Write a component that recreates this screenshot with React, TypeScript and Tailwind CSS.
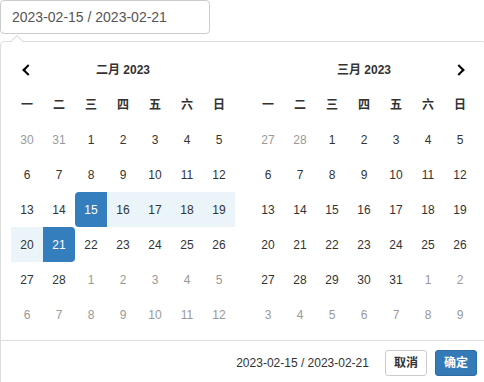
import React from "react";

type Cell = { d: number; off?: boolean; start?: boolean; end?: boolean; inRange?: boolean };

const feb: Cell[][] = [
  [{ d: 30, off: true }, { d: 31, off: true }, { d: 1 }, { d: 2 }, { d: 3 }, { d: 4 }, { d: 5 }],
  [{ d: 6 }, { d: 7 }, { d: 8 }, { d: 9 }, { d: 10 }, { d: 11 }, { d: 12 }],
  [{ d: 13 }, { d: 14 }, { d: 15, start: true }, { d: 16, inRange: true }, { d: 17, inRange: true }, { d: 18, inRange: true }, { d: 19, inRange: true }],
  [{ d: 20, inRange: true }, { d: 21, end: true }, { d: 22 }, { d: 23 }, { d: 24 }, { d: 25 }, { d: 26 }],
  [{ d: 27 }, { d: 28 }, { d: 1, off: true }, { d: 2, off: true }, { d: 3, off: true }, { d: 4, off: true }, { d: 5, off: true }],
  [6, 7, 8, 9, 10, 11, 12].map((d) => ({ d, off: true })),
];

const mar: Cell[][] = [
  [{ d: 27, off: true }, { d: 28, off: true }, { d: 1 }, { d: 2 }, { d: 3 }, { d: 4 }, { d: 5 }],
  [6, 7, 8, 9, 10, 11, 12].map((d) => ({ d })),
  [13, 14, 15, 16, 17, 18, 19].map((d) => ({ d })),
  [20, 21, 22, 23, 24, 25, 26].map((d) => ({ d })),
  [{ d: 27 }, { d: 28 }, { d: 29 }, { d: 30 }, { d: 31 }, { d: 1, off: true }, { d: 2, off: true }],
  [3, 4, 5, 6, 7, 8, 9].map((d) => ({ d, off: true })),
];

const weekdays = ["一", "二", "三", "四", "五", "六", "日"];

function DayCell({ c }: { c: Cell }) {
  let cls = "w-[32px] h-[35px] flex items-center justify-center text-[12px] ";
  if (c.start) cls += "bg-[#357ebd] text-white rounded-l-[4px]";
  else if (c.end) cls += "bg-[#357ebd] text-white rounded-r-[4px]";
  else if (c.inRange) cls += "bg-[#ebf4f8] text-[#333]";
  else if (c.off) cls += "text-[#999]";
  else cls += "text-[#333]";
  return <div className={cls}>{c.d}</div>;
}

function Calendar({ title, rows, prev, next }: { title: string; rows: Cell[][]; prev?: boolean; next?: boolean }) {
  return (
    <div className="w-[224px] flex flex-col">
      <div className="flex h-[35px] items-center">
        <div className="w-[32px] h-[35px] flex items-center justify-center">
          {prev && <span className="inline-block border-solid border-black border-r-2 border-b-2 p-[3px] rotate-135 ml-[2px]" />}
        </div>
        <div className="w-[160px] text-center text-[12px] font-bold text-[#333]">{title}</div>
        <div className="w-[32px] h-[35px] flex items-center justify-center">
          {next && <span className="inline-block border-solid border-black border-r-2 border-b-2 p-[3px] -rotate-45 mr-[2px]" />}
        </div>
      </div>
      <div className="flex h-[35px] items-center">
        {weekdays.map((w) => (
          <div key={w} className="w-[32px] text-center text-[12px] font-bold text-[#333]">
            {w}
          </div>
        ))}
      </div>
      {rows.map((r, i) => (
        <div key={i} className="flex">
          {r.map((c, j) => (
            <DayCell key={j} c={c} />
          ))}
        </div>
      ))}
    </div>
  );
}

export default function App() {
  return (
    <div className="w-[484px] h-[382px] overflow-hidden bg-white font-['Liberation_Sans','Noto_Sans_CJK_SC',sans-serif]">
      <div className="w-[210px] h-[34px] border border-[#ccc] rounded-[4px] flex items-center pl-[11px] text-[14px] text-[#555]">
        2023-02-15 / 2023-02-21
      </div>
      <div className="relative mt-[7px] w-[486px] border border-[#ddd] rounded-[4px] bg-white">
        <div className="absolute top-[-7px] left-[9px] w-0 h-0 border-l-[7px] border-r-[7px] border-b-[7px] border-l-transparent border-r-transparent border-b-[#ccc]" />
        <div className="absolute top-[-6px] left-[10px] w-0 h-0 border-l-[6px] border-r-[6px] border-b-[6px] border-l-transparent border-r-transparent border-b-white" />
        <div className="flex pt-[10px] pb-[8px] pl-[10px]">
          <Calendar title="二月 2023" rows={feb} prev />
          <div className="ml-[17px]">
            <Calendar title="三月 2023" rows={mar} next />
          </div>
        </div>
        <div className="border-t border-[#ddd] flex items-center justify-end pt-[9px] pb-[8px] pr-[8px]">
          <span className="text-[12px] text-[#333] mr-[8px]">2023-02-15 / 2023-02-21</span>
          <button className="ml-[8px] h-[26px] px-[8px] border border-[#ccc] rounded-[3px] bg-white text-[12px] font-bold text-[#333]">
            取消
          </button>
          <button className="ml-[8px] h-[26px] px-[8px] border border-[#2e6da4] rounded-[3px] bg-[#337ab7] text-[12px] font-bold text-white">
            确定
          </button>
        </div>
      </div>
    </div>
  );
}
